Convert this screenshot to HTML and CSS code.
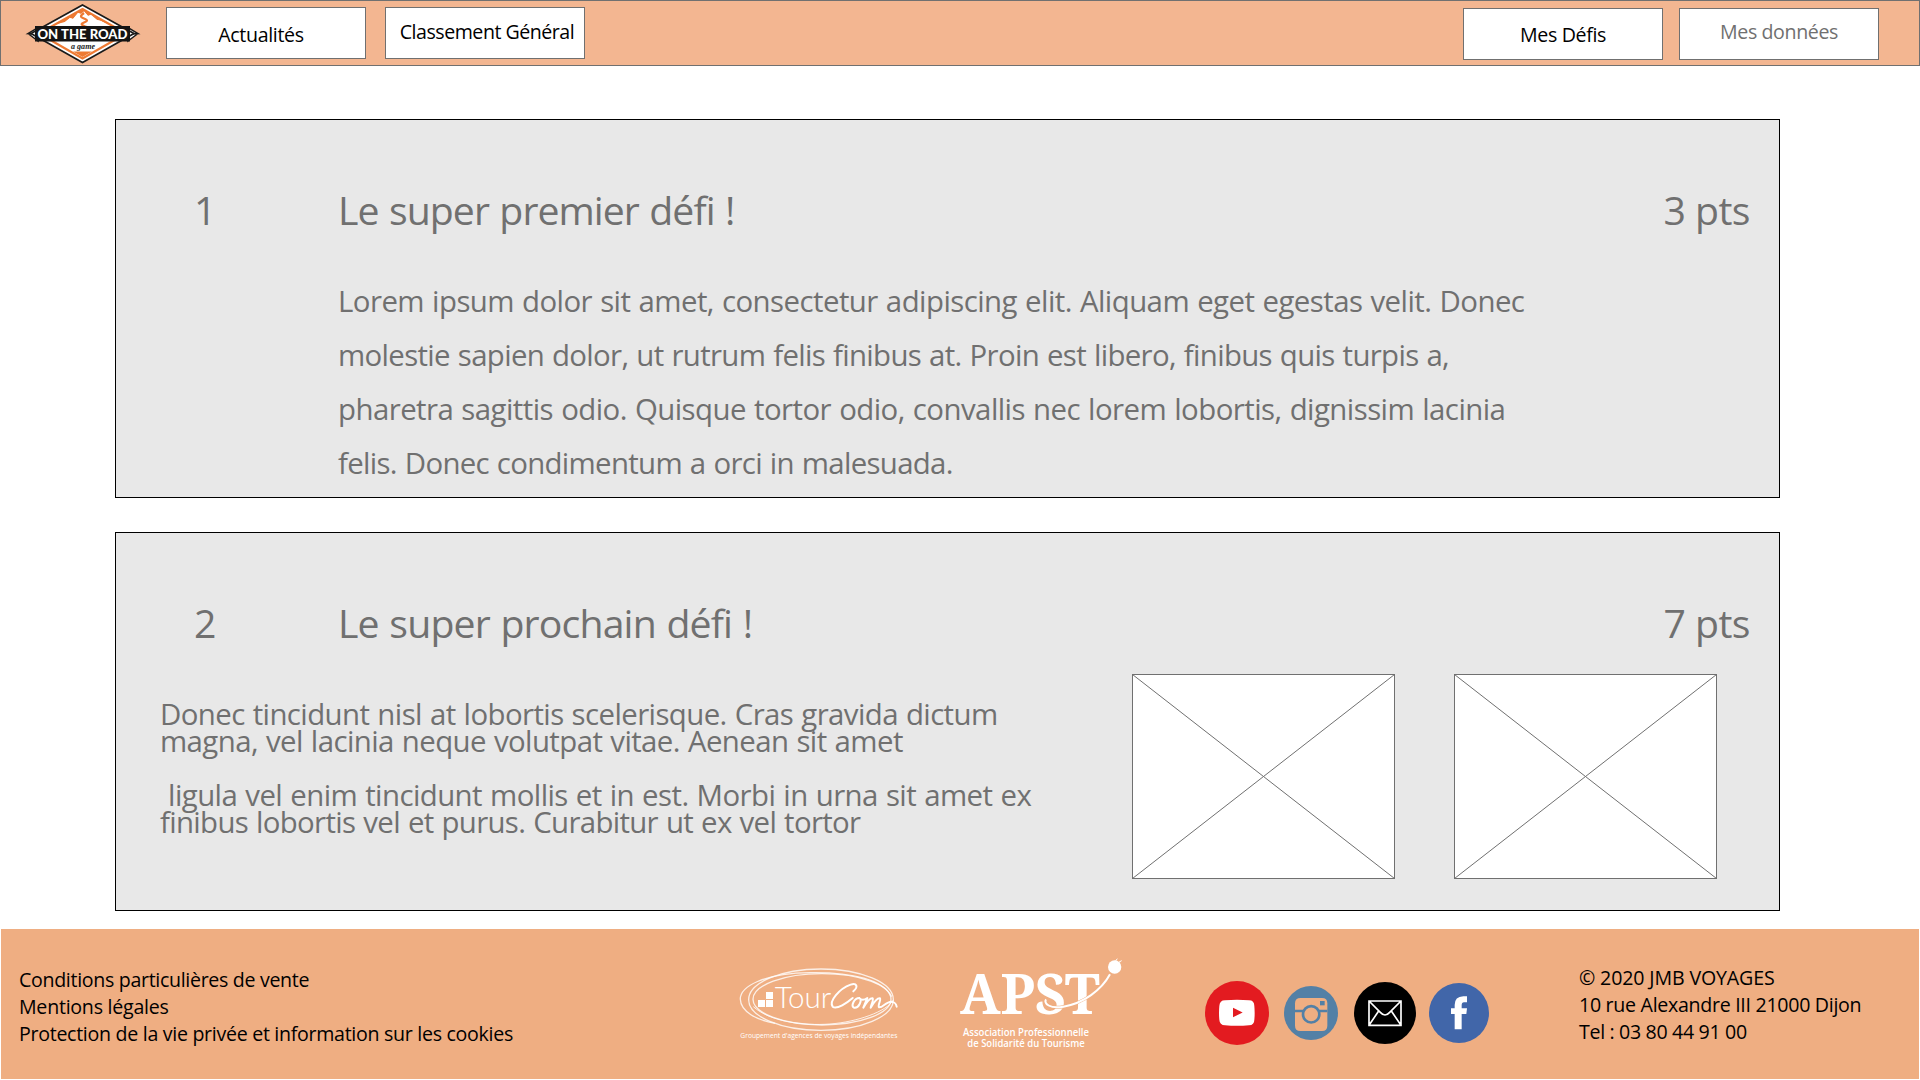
FILE: index.html
```html
<!DOCTYPE html>
<html lang="fr">
<head>
<meta charset="utf-8">
<title>On the Road – Mes défis</title>
<link rel="stylesheet" href="styles.css">
</head>
<body>
<header class="topbar">
  <svg class="logo" viewBox="0 0 112 60" aria-label="On the Road, a game">
    <path d="M11 30 1 29.500 11 23.500V37L1 29.500M101 30 111 29.500 101 23.500V37L111 29.500" fill="#fff" stroke="#1a1a1a" stroke-width="1.500"/>
    <path d="M55.500 1 107 29.500 55.500 58.500 4 29.500Z" fill="#fff" stroke="#1a1a1a" stroke-width="1.700"/>
    <path d="M55.500 5 99 29.500 55.500 54.500 12 29.500Z" fill="#fff" stroke="#ee7a33" stroke-width="2.200"/>
    <path d="M55.500 5 28 20.500 38 18 43 14 46 15 51 9 54 10 57 7.500 61 12 64 11 70 16 74 17 83 20.500Z" fill="#ee7a33"/>
    <path d="M30 23 38 18 43 14 46 15 51 9 54 10 57 7.500 61 12 64 11 70 16 74 17 82 23Z" fill="#fff"/>
    <path d="M57 9C53 12 53 13 57 14.500S61 17 57 18.500 54 21 60 23" fill="none" stroke="#ee7a33" stroke-width="2.200"/>
    <path d="M46 47.500H65L55.500 53Z" fill="#ee7a33"/>
    <path d="M8 22H103V37.500H8Z" fill="#141414"/>
    <text class="logo-name" x="10.500" y="34.500" textLength="90" lengthAdjust="spacingAndGlyphs">ON THE ROAD</text>
    <text class="logo-tag" x="44" y="45.300" textLength="24" lengthAdjust="spacingAndGlyphs">a game</text>
  </svg>
  <nav class="nav">
    <a class="tab tab-news">Actualités</a>
    <a class="tab tab-rank">Classement Général</a>
  </nav>
  <nav class="nav nav-user">
    <a class="tab tab-mine">Mes Défis</a>
    <a class="tab tab-data">Mes données</a>
  </nav>
</header>

<main class="list">
  <section class="card">
    <div class="head">
      <span class="rank">1</span>
      <h2 class="title">Le super premier défi !</h2>
      <span class="points">3 pts</span>
    </div>
    <div class="text wide">
      <p class="line t42">Lorem ipsum dolor sit amet, consectetur adipiscing elit. Aliquam eget egestas velit. Donec</p>
      <p class="line t52">molestie sapien dolor, ut rutrum felis finibus at. Proin est libero, finibus quis turpis a,</p>
      <p class="line t42">pharetra sagittis odio. Quisque tortor odio, convallis nec lorem lobortis, dignissim lacinia</p>
      <p class="line t54">felis. Donec condimentum a orci in malesuada.</p>
    </div>
  </section>

  <section class="card">
    <div class="head">
      <span class="rank">2</span>
      <h2 class="title next">Le super prochain défi !</h2>
      <span class="points">7 pts</span>
    </div>
    <div class="media">
      <div class="text tight">
        <p class="line t44">Donec tincidunt nisl at lobortis scelerisque. Cras gravida dictum</p>
        <p class="line t44">magna, vel lacinia neque volutpat vitae. Aenean sit amet</p>
        <p class="line t39 gap">&nbsp;ligula vel enim tincidunt mollis et in est. Morbi in urna sit amet ex</p>
        <p class="line t52">finibus lobortis vel et purus. Curabitur ut ex vel tortor</p>
      </div>
      <svg class="frame" viewBox="0 0 263 205"><rect x=".5" y=".5" width="262" height="204"/><path d="M.5 .5 262.500 204.500M262.500 .5 .5 204.500"/></svg>
      <svg class="frame second" viewBox="0 0 263 205"><rect x=".5" y=".5" width="262" height="204"/><path d="M.5 .5 262.500 204.500M262.500 .5 .5 204.500"/></svg>
    </div>
  </section>
</main>

<footer class="footer">
  <div class="legal">
    <p class="t32">Conditions particulières de vente</p>
    <p class="t25">Mentions légales</p>
    <p class="t29">Protection de la vie privée et information sur les cookies</p>
  </div>
  <svg class="tourcom" viewBox="39 75 510 240" aria-label="TourCom">
    <g fill="none" stroke="#fff" stroke-opacity=".8">
      <ellipse cx="303" cy="179" rx="217" ry="92" stroke-width="4"/>
      <ellipse cx="306" cy="178" rx="207" ry="77" stroke-width="4"/>
      <path d="M515 170C490 120 400 96 270 98 130 100 60 140 61 178 62 215 110 240 165 250" stroke-width="4"/>
      <path d="M100 200C150 245 250 258 330 252S500 215 520 180" stroke-width="3"/>
    </g>
    <path d="M114 180H135V201H114ZM138 156H159V177H138ZM138 180H159V201H138Z" fill="#fff"/>
    <text class="tc-tour" x="164" y="203" textLength="170" lengthAdjust="spacingAndGlyphs">Tour</text>
    <g fill="none" stroke="#fff" stroke-width="6" stroke-linecap="round" stroke-linejoin="round">
      <path d="M400 154C416 140 410 128 392 134 358 146 326 184 338 200 350 210 382 188 398 174"/>
      <path d="M418 174C402 174 392 198 402 203 416 206 428 180 418 174 426 184 436 178 442 174L430 203C440 186 452 174 458 175 462 178 452 198 452 203 462 186 474 174 480 175 484 178 472 198 477 202 488 204 498 184 515 185 525 187 528 190 530 200"/>
    </g>
    <text class="tc-sub" x="61" y="293" textLength="471" lengthAdjust="spacingAndGlyphs">Groupement d'agences de voyages indépendantes</text>
  </svg>
  <svg class="apst" viewBox="705 45 510 285" aria-label="APST">
    <text class="apst-name" x="720" y="223" textLength="420" lengthAdjust="spacingAndGlyphs">APST</text>
    <path d="M978 178C970 190 990 208 1030 200 1090 190 1145 150 1170 103" fill="none" stroke="#efae82" stroke-width="9"/>
    <path d="M978 178C970 190 990 208 1030 200 1090 190 1145 150 1170 103" fill="none" stroke="#fff" stroke-width="6"/>
    <circle cx="1184" cy="81" r="20" fill="#fff"/>
    <path d="M1186 64 1192 56M1196 67 1205 62" stroke="#fff" stroke-width="3"/>
    <text class="apst-sub" x="729" y="287" textLength="378" lengthAdjust="spacingAndGlyphs">Association Professionnelle</text>
    <text class="apst-sub" x="742" y="322" textLength="352" lengthAdjust="spacingAndGlyphs">de Solidarité du Tourisme</text>
  </svg>
  <div class="social">
    <svg width="64" height="64" viewBox="0 0 192 192"><circle cx="96" cy="96" r="96" fill="#e31b20"/><path d="M60 58Q96 55 132 58 148 58 148 75 150 96 148 116 148 132 132 133 96 136 60 133 44 132 43 116 41 96 43 75 44 58 60 58Z" fill="#fff"/><path d="M84 80 113 94.500 84 109Z" fill="#e31b20"/></svg>
    <svg class="insta" width="54" height="54" viewBox="0 0 162 162"><circle cx="81" cy="81" r="81" fill="#5380a6"/><path d="M50 36H114Q130 36 130 52V119Q130 135 114 135H49Q33 135 33 119V52Q33 36 50 36Z" fill="#efae82"/><path d="M33 75H130" stroke="#5380a6" stroke-width="8"/><circle cx="81.500" cy="85" r="24.500" fill="#efae82" stroke="#5380a6" stroke-width="8"/><path d="M108 45H122V58H108Z" fill="#5380a6"/></svg>
    <svg class="mail" width="62" height="62" viewBox="0 0 186 186"><circle cx="93" cy="93" r="93"/><path d="M45 57H141V130H45ZM45 57 79 91Q93 107 107 91L141 57M74 87 45 130M112 87 141 130" fill="none" stroke="#fff" stroke-width="5"/></svg>
    <svg width="60" height="60" viewBox="0 0 180 180"><circle cx="90" cy="90" r="90" fill="#4166a9"/><path d="M77 139V93H66V76H77V66Q77 41 103 40H114V58H105Q98 58 98 67V76H114L112 93H98V139Z" fill="#fff"/></svg>
  </div>
  <address class="contact">
    <p class="t14">© 2020 JMB VOYAGES</p>
    <p class="t29">10 rue Alexandre III 21000 Dijon</p>
    <p class="t36">Tel : 03 80 44 91 00</p>
  </address>
</footer>
</body>
</html>
```
FILE: styles.css
```css
* { box-sizing: border-box; }
body {
  margin: 0;
  width: 1920px;
  height: 1080px;
  overflow: hidden;
  background: #fff;
  font-family: "Open Sans", "Noto Sans", sans-serif;
  font-size: 19.6px;
  color: #000;
}
p, h2 { margin: 0; font-weight: 400; white-space: nowrap; }
svg { display: block; flex: none; overflow: visible; }

/* Top bar */
.topbar {
  display: flex;
  height: 66px;
  padding: 0 40px 0 25px;
  background: #f3b691;
  border: 1px solid #707070;
}
.logo { width: 112px; height: 60px; margin: 3px -1px 0 1px; }
.logo-name { font: 900 13px Lato, sans-serif; fill: #fff; }
.logo-tag { font: italic 700 9px "Liberation Serif", serif; fill: #1a1a1a; }
.nav { display: flex; gap: 19px; margin: 6px 0 0 28px; }
.nav-user { gap: 16px; margin: 7px 0 0 auto; }
.tab {
  width: 200px;
  height: 52px;
  background: #fff;
  border: 1px solid #707070;
  text-align: center;
  white-space: nowrap;
}
.tab-news { line-height: 53px; letter-spacing: -.34px; padding-right: 10px; }
.tab-rank { line-height: 47px; letter-spacing: -.485px; padding-left: 4px; }
.tab-mine { line-height: 51px; letter-spacing: -.35px; }
.tab-data { line-height: 45px; letter-spacing: -.39px; color: #707070; }

/* Challenge cards */
.list {
  display: flex;
  flex-direction: column;
  gap: 34px;
  padding: 53px 0 18px 115px;
}
.card {
  width: 1665px;
  height: 379px;
  padding-top: 63px;
  background: #e8e8e8;
  border: 1px solid #000;
  color: #707070;
}
.head {
  display: flex;
  padding: 0 29px 0 78px;
  font-size: 39.2px;
  line-height: 54px;
}
.rank { width: 144px; }
.title { font-size: inherit; letter-spacing: -.95px; word-spacing: 1.2px; }
.next { letter-spacing: -.83px; }
.points { margin-left: auto; letter-spacing: -.55px; }
.text { font-size: 29.4px; }
.line { word-spacing: 1px; }
.wide { padding: 37px 0 0 222px; line-height: 54px; }
.media { display: flex; padding: 24px 0 0 44px; }
.tight { width: 972px; padding-top: 27px; line-height: 27px; }
.gap { margin-top: 27px; }
.frame { width: 263px; height: 205px; fill: #fff; stroke: #707070; }
.second { margin-left: 59px; }

/* Per-line tracking */
.t14 { letter-spacing: -.14px; }
.t25 { letter-spacing: -.25px; }
.t29 { letter-spacing: -.295px; }
.t32 { letter-spacing: -.32px; }
.t36 { letter-spacing: -.33px; }
.t39 { letter-spacing: -.57px; }
.t42 { letter-spacing: -.55px; }
.t44 { letter-spacing: -.59px; }
.t52 { letter-spacing: -.67px; }
.t54 { letter-spacing: -.69px; }

/* Footer */
.footer {
  display: flex;
  width: 1918px;
  height: 150px;
  margin-left: 1px;
  padding-left: 18px;
  background: #efae82;
  line-height: 27px;
}
.legal { width: 714px; padding-top: 37px; }
.tourcom { width: 170px; height: 80px; margin-top: 36px; }
.apst { width: 170px; height: 95px; margin: 26px 0 0 52px; }
.tc-tour { font: 300 90px Lato, sans-serif; fill: #fff; }
.tc-sub { font: 400 21px "Open Sans", sans-serif; fill: #fff; }
.apst-name { font: 700 170px "Noto Serif", "DejaVu Serif Condensed", "DejaVu Serif", serif; fill: #fff; }
.apst-sub { font: 600 30px "Open Sans", sans-serif; fill: #fff; }
.social { display: flex; align-items: center; height: 64px; margin: 52px 0 0 80px; }
.insta { margin-left: 15px; }
.mail { margin: 0 13px 0 16px; }
.contact { padding: 35px 0 0 90px; font-style: normal; }
```
